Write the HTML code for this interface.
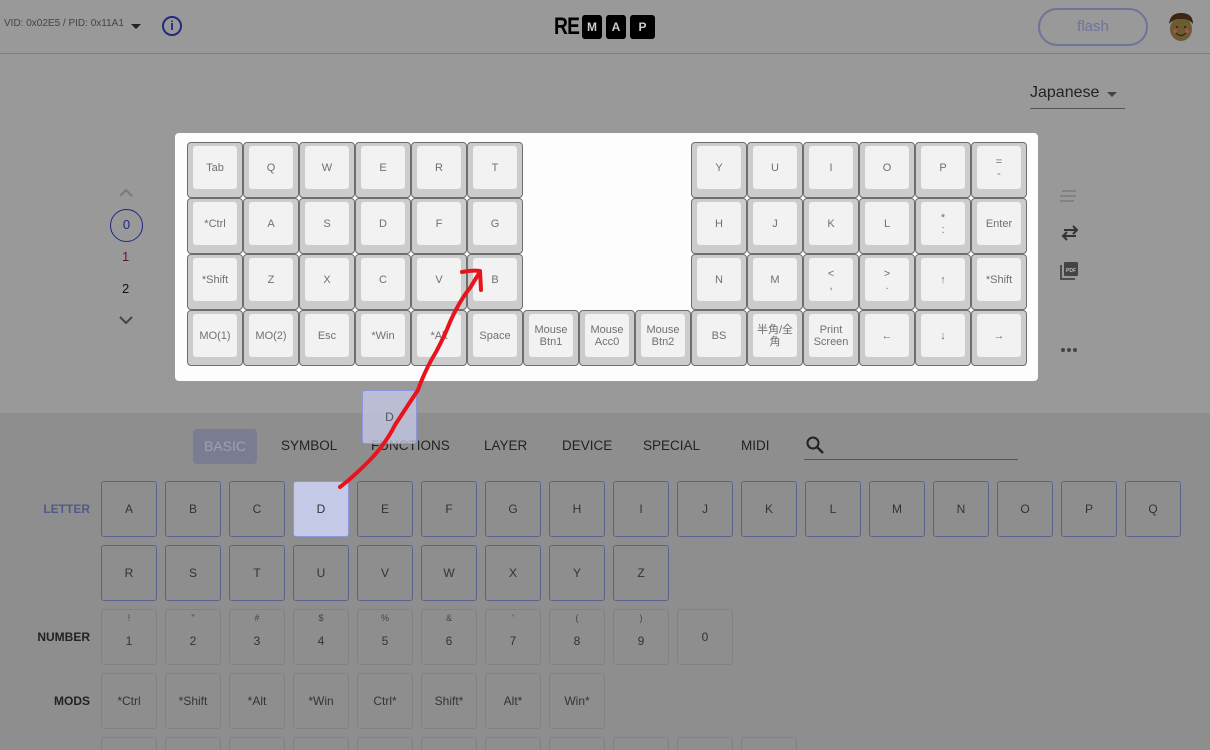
<!DOCTYPE html>
<html><head><meta charset="utf-8">
<style>
*{box-sizing:border-box;margin:0;padding:0}
html{width:1210px;height:750px;overflow:hidden}
body{width:1210px;height:750px;overflow:hidden;background:#999;font-family:"Liberation Sans","Noto Sans CJK JP",sans-serif;position:relative}
.a{position:absolute}
.hdr{left:0;top:0;width:1210px;height:54px;border-bottom:1px solid #7f7f7f;background:#999}
.k{position:absolute;width:56px;height:56px;background:#ccc;border:1px solid #6e6e6e;border-radius:4px}
.k span{position:absolute;left:5px;top:3px;width:44px;height:43px;background:#f2f2f2;border-radius:3px;display:flex;align-items:center;justify-content:center;text-align:center;font-size:11px;color:#707070;line-height:12px}
.b{position:absolute;width:56px;height:56px;border:1px solid #5a6290;border-radius:3px;display:flex;align-items:center;justify-content:center;font-size:12px;color:#333}
.g{border-color:#828282}
.e{height:13px;border-bottom:none;border-radius:3px 3px 0 0}
.n small{position:absolute;top:3px;left:0;width:100%;text-align:center;font-size:9px;color:#444}
.lbl{position:absolute;font-size:12px;font-weight:bold;color:#222;text-align:right;width:80px;left:10px}
.tab{position:absolute;top:438px;font-size:13.5px;color:#222;letter-spacing:0}
</style></head><body>
<div class="a hdr"></div>
<div class="a" style="left:4px;top:18px;font-size:10px;color:#444">VID: 0x02E5 / PID: 0x11A1</div>
<div class="a" style="left:131px;top:24px;width:0;height:0;border-left:5px solid transparent;border-right:5px solid transparent;border-top:5px solid #222"></div>
<div class="a" style="left:162px;top:16px;width:20px;height:20px;border:2px solid #1f2a80;border-radius:50%;color:#1f2a80;font-size:13px;font-weight:bold;text-align:center;line-height:16px">i</div>
<div class="a" style="left:554px;top:14px;font-size:24px;font-weight:bold;color:#000;letter-spacing:-1px;line-height:26px;transform:scaleX(.8);transform-origin:left">RE</div>
<div class="a" style="left:582px;top:15px;width:20px;height:24px;background:#000;border-radius:3px;color:#ccc;font-size:12px;font-weight:bold;text-align:center;line-height:24px">M</div>
<div class="a" style="left:606px;top:15px;width:20px;height:24px;background:#000;border-radius:3px;color:#ccc;font-size:12px;font-weight:bold;text-align:center;line-height:24px">A</div>
<div class="a" style="left:630px;top:15px;width:25px;height:24px;background:#000;border-radius:3px;color:#ccc;font-size:12px;font-weight:bold;text-align:center;line-height:24px">P</div>
<div class="a" style="left:1038px;top:8px;width:110px;height:38px;border:2px solid #6d7498;border-radius:20px;color:#6d7498;font-size:15px;text-align:center;line-height:34px">flash</div>
<svg class="a" style="left:1166px;top:10px" width="30" height="34" viewBox="0 0 30 34"><ellipse cx="15" cy="19" rx="11" ry="12" fill="#6b5b2e"/><path d="M3 14 Q4 3 15 3 Q27 3 27 14 Q22 8 15 9 Q8 8 3 14Z" fill="#3a2612"/><circle cx="9" cy="21" r="2" fill="#b24b5a"/><circle cx="21" cy="21" r="2" fill="#b24b5a"/><path d="M10 23 Q15 28 20 23" stroke="#222" fill="none"/><circle cx="11" cy="17" r="1" fill="#222"/><circle cx="19" cy="17" r="1" fill="#222"/></svg>

<div class="a" style="left:1030px;top:84px;font-size:16px;color:#222">Japanese</div>
<div class="a" style="left:1107px;top:92px;border-left:5px solid transparent;border-right:5px solid transparent;border-top:5px solid #444"></div>
<div class="a" style="left:1030px;top:108px;width:95px;height:1px;background:#555"></div>

<svg class="a" style="left:118px;top:187px" width="16" height="12"><path d="M2 9 L8 3 L14 9" stroke="#7a7a7a" stroke-width="2" fill="none"/></svg>
<div class="a" style="left:110px;top:209px;width:33px;height:33px;border:1.5px solid #1f2a80;border-radius:50%;text-align:center;line-height:30px;color:#1f2a80;font-size:13px">0</div>
<div class="a" style="left:122px;top:249px;color:#6a1030;font-size:13px">1</div>
<div class="a" style="left:122px;top:281px;color:#111;font-size:13px">2</div>
<svg class="a" style="left:118px;top:314px" width="16" height="12"><path d="M2 3 L8 9 L14 3" stroke="#444" stroke-width="2" fill="none"/></svg>

<svg class="a" style="left:1058px;top:185px" width="24" height="180"><path d="M4 6h14M2 11h16M2 16h14" stroke="#7a7a7a" stroke-width="1.6"/><path d="M6 45h13M15 41l4 4-4 4M18 51H5M9 47l-4 4 4 4" stroke="#333" stroke-width="2" fill="none"/><rect x="6" y="77" width="14" height="14" rx="1" fill="#444"/><path d="M3 80v14h14" stroke="#444" stroke-width="1.8" fill="none"/><text x="13" y="87" font-size="5" fill="#bbb" text-anchor="middle" font-family="Liberation Sans" font-weight="bold">PDF</text><circle cx="5" cy="165" r="2" fill="#444"/><circle cx="11" cy="165" r="2" fill="#444"/><circle cx="17" cy="165" r="2" fill="#444"/></svg>

<div class="a" style="left:175px;top:133px;width:863px;height:248px;background:#fdfdfd;border-radius:4px"></div>
<div class="k" style="left:187px;top:142px"><span>Tab</span></div>
<div class="k" style="left:243px;top:142px"><span>Q</span></div>
<div class="k" style="left:299px;top:142px"><span>W</span></div>
<div class="k" style="left:355px;top:142px"><span>E</span></div>
<div class="k" style="left:411px;top:142px"><span>R</span></div>
<div class="k" style="left:467px;top:142px"><span>T</span></div>
<div class="k" style="left:691px;top:142px"><span>Y</span></div>
<div class="k" style="left:747px;top:142px"><span>U</span></div>
<div class="k" style="left:803px;top:142px"><span>I</span></div>
<div class="k" style="left:859px;top:142px"><span>O</span></div>
<div class="k" style="left:915px;top:142px"><span>P</span></div>
<div class="k" style="left:971px;top:142px"><span>=<br>-</span></div>
<div class="k" style="left:187px;top:198px"><span>*Ctrl</span></div>
<div class="k" style="left:243px;top:198px"><span>A</span></div>
<div class="k" style="left:299px;top:198px"><span>S</span></div>
<div class="k" style="left:355px;top:198px"><span>D</span></div>
<div class="k" style="left:411px;top:198px"><span>F</span></div>
<div class="k" style="left:467px;top:198px"><span>G</span></div>
<div class="k" style="left:691px;top:198px"><span>H</span></div>
<div class="k" style="left:747px;top:198px"><span>J</span></div>
<div class="k" style="left:803px;top:198px"><span>K</span></div>
<div class="k" style="left:859px;top:198px"><span>L</span></div>
<div class="k" style="left:915px;top:198px"><span>*<br>:</span></div>
<div class="k" style="left:971px;top:198px"><span>Enter</span></div>
<div class="k" style="left:187px;top:254px"><span>*Shift</span></div>
<div class="k" style="left:243px;top:254px"><span>Z</span></div>
<div class="k" style="left:299px;top:254px"><span>X</span></div>
<div class="k" style="left:355px;top:254px"><span>C</span></div>
<div class="k" style="left:411px;top:254px"><span>V</span></div>
<div class="k" style="left:467px;top:254px"><span>B</span></div>
<div class="k" style="left:691px;top:254px"><span>N</span></div>
<div class="k" style="left:747px;top:254px"><span>M</span></div>
<div class="k" style="left:803px;top:254px"><span>&lt;<br>,</span></div>
<div class="k" style="left:859px;top:254px"><span>&gt;<br>.</span></div>
<div class="k" style="left:915px;top:254px"><span>↑</span></div>
<div class="k" style="left:971px;top:254px"><span>*Shift</span></div>
<div class="k" style="left:187px;top:310px"><span>MO(1)</span></div>
<div class="k" style="left:243px;top:310px"><span>MO(2)</span></div>
<div class="k" style="left:299px;top:310px"><span>Esc</span></div>
<div class="k" style="left:355px;top:310px"><span>*Win</span></div>
<div class="k" style="left:411px;top:310px"><span>*Alt</span></div>
<div class="k" style="left:467px;top:310px"><span>Space</span></div>
<div class="k" style="left:523px;top:310px"><span>Mouse<br>Btn1</span></div>
<div class="k" style="left:579px;top:310px"><span>Mouse<br>Acc0</span></div>
<div class="k" style="left:635px;top:310px"><span>Mouse<br>Btn2</span></div>
<div class="k" style="left:691px;top:310px"><span>BS</span></div>
<div class="k" style="left:747px;top:310px"><span>半角/全<br>角</span></div>
<div class="k" style="left:803px;top:310px"><span>Print<br>Screen</span></div>
<div class="k" style="left:859px;top:310px"><span>←</span></div>
<div class="k" style="left:915px;top:310px"><span>↓</span></div>
<div class="k" style="left:971px;top:310px"><span>→</span></div>

<div class="a" style="left:0;top:413px;width:1210px;height:337px;background:#8e8e8e"></div>
<div class="a" style="left:193px;top:429px;width:64px;height:35px;background:#7a7c92;border-radius:4px;color:#9da0b8;font-size:14px;text-align:center;line-height:35px">BASIC</div>
<div class="tab" style="left:281px">SYMBOL</div>
<div class="tab" style="left:371px">FUNCTIONS</div>
<div class="tab" style="left:484px">LAYER</div>
<div class="tab" style="left:562px">DEVICE</div>
<div class="tab" style="left:643px">SPECIAL</div>
<div class="tab" style="left:741px">MIDI</div>
<svg class="a" style="left:805px;top:435px" width="22" height="22"><circle cx="8" cy="8" r="5.5" stroke="#222" stroke-width="2" fill="none"/><path d="M12 12l6 6" stroke="#222" stroke-width="2.4"/></svg>
<div class="a" style="left:804px;top:459px;width:214px;height:1px;background:#555"></div>

<div class="lbl" style="top:502px;color:#525a8a">LETTER</div>
<div class="lbl" style="top:630px">NUMBER</div>
<div class="lbl" style="top:694px">MODS</div>

<div class="b" style="left:101px;top:481px">A</div>
<div class="b" style="left:165px;top:481px">B</div>
<div class="b" style="left:229px;top:481px">C</div>
<div class="b" style="left:293px;top:481px;background:#c5c9e8;border-color:#8d96d8">D</div>
<div class="b" style="left:357px;top:481px">E</div>
<div class="b" style="left:421px;top:481px">F</div>
<div class="b" style="left:485px;top:481px">G</div>
<div class="b" style="left:549px;top:481px">H</div>
<div class="b" style="left:613px;top:481px">I</div>
<div class="b" style="left:677px;top:481px">J</div>
<div class="b" style="left:741px;top:481px">K</div>
<div class="b" style="left:805px;top:481px">L</div>
<div class="b" style="left:869px;top:481px">M</div>
<div class="b" style="left:933px;top:481px">N</div>
<div class="b" style="left:997px;top:481px">O</div>
<div class="b" style="left:1061px;top:481px">P</div>
<div class="b" style="left:1125px;top:481px">Q</div>
<div class="b" style="left:101px;top:545px">R</div>
<div class="b" style="left:165px;top:545px">S</div>
<div class="b" style="left:229px;top:545px">T</div>
<div class="b" style="left:293px;top:545px">U</div>
<div class="b" style="left:357px;top:545px">V</div>
<div class="b" style="left:421px;top:545px">W</div>
<div class="b" style="left:485px;top:545px">X</div>
<div class="b" style="left:549px;top:545px">Y</div>
<div class="b" style="left:613px;top:545px">Z</div>

<div class="b g n" style="left:101px;top:609px;padding-top:8px"><small>!</small>1</div>
<div class="b g n" style="left:165px;top:609px;padding-top:8px"><small>"</small>2</div>
<div class="b g n" style="left:229px;top:609px;padding-top:8px"><small>#</small>3</div>
<div class="b g n" style="left:293px;top:609px;padding-top:8px"><small>$</small>4</div>
<div class="b g n" style="left:357px;top:609px;padding-top:8px"><small>%</small>5</div>
<div class="b g n" style="left:421px;top:609px;padding-top:8px"><small>&amp;</small>6</div>
<div class="b g n" style="left:485px;top:609px;padding-top:8px"><small>'</small>7</div>
<div class="b g n" style="left:549px;top:609px;padding-top:8px"><small>(</small>8</div>
<div class="b g n" style="left:613px;top:609px;padding-top:8px"><small>)</small>9</div>
<div class="b g" style="left:677px;top:609px">0</div>

<div class="b g" style="left:101px;top:673px">*Ctrl</div>
<div class="b g" style="left:165px;top:673px">*Shift</div>
<div class="b g" style="left:229px;top:673px">*Alt</div>
<div class="b g" style="left:293px;top:673px">*Win</div>
<div class="b g" style="left:357px;top:673px">Ctrl*</div>
<div class="b g" style="left:421px;top:673px">Shift*</div>
<div class="b g" style="left:485px;top:673px">Alt*</div>
<div class="b g" style="left:549px;top:673px">Win*</div>

<div class="b g e" style="left:101px;top:737px"></div>
<div class="b g e" style="left:165px;top:737px"></div>
<div class="b g e" style="left:229px;top:737px"></div>
<div class="b g e" style="left:293px;top:737px"></div>
<div class="b g e" style="left:357px;top:737px"></div>
<div class="b g e" style="left:421px;top:737px"></div>
<div class="b g e" style="left:485px;top:737px"></div>
<div class="b g e" style="left:549px;top:737px"></div>
<div class="b g e" style="left:613px;top:737px"></div>
<div class="b g e" style="left:677px;top:737px"></div>
<div class="b g e" style="left:741px;top:737px"></div>

<div class="a" style="left:362px;top:390px;width:55px;height:54px;background:rgba(197,201,232,.75);border:1px solid #8d96d8;border-radius:3px;text-align:center;line-height:52px;font-size:12px;color:#555">D</div>

<svg class="a" style="left:0;top:0" width="1210" height="750"><path d="M340 487 Q352 478 368 462 Q385 445 395 425 Q408 405 418 390 Q425 370 436 352 Q445 335 450 322 Q460 300 470 288 Q476 278 480 272" stroke="#e8141c" stroke-width="4" fill="none" stroke-linecap="round"/><path d="M462 272 Q472 270 480 271 L481 290" stroke="#e8141c" stroke-width="4" fill="none" stroke-linecap="round" stroke-linejoin="round"/></svg>
</body></html>
